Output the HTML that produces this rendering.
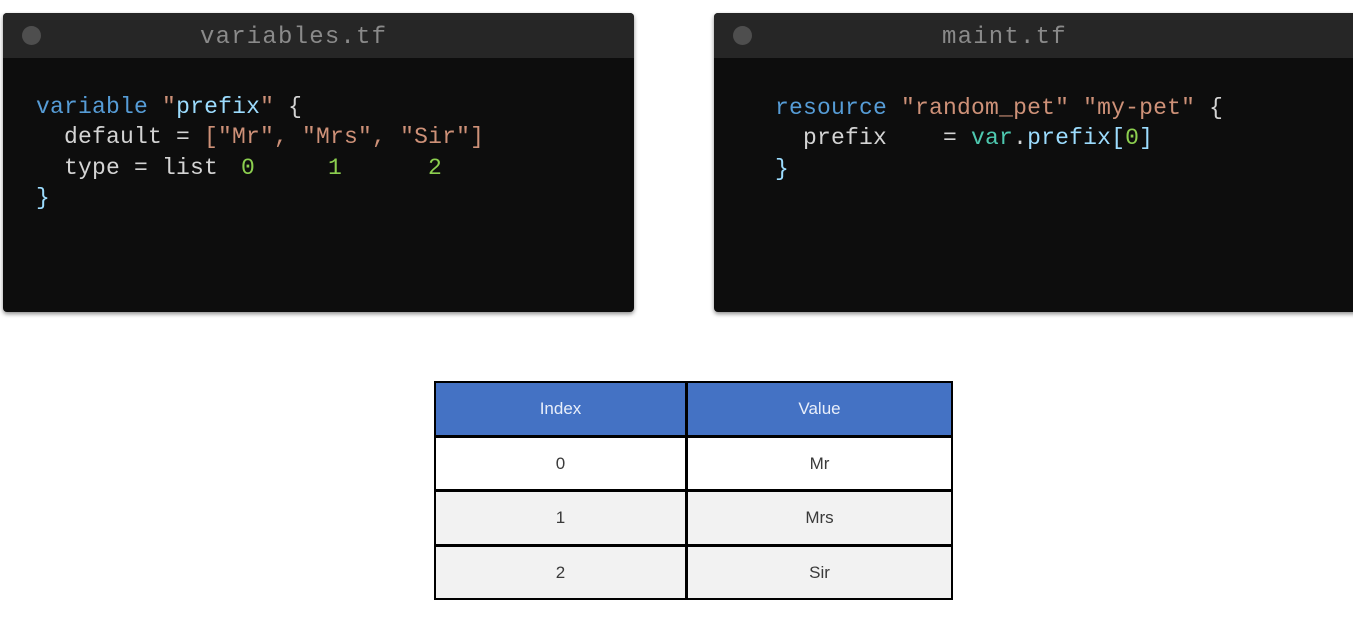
<!DOCTYPE html>
<html><head><meta charset="utf-8"><style>
body{margin:0;width:1353px;height:620px;background:#fff;position:relative;overflow:hidden;font-family:"Liberation Mono",monospace}
.pan{position:absolute;top:13px;height:299px;background:#0d0d0d;border-radius:4px;box-shadow:0 2px 4px rgba(0,0,0,.45);overflow:hidden}
.bar{position:absolute;left:0;right:0;top:0;height:45px;background:#262626}
.dot{position:absolute;left:19px;top:13px;width:19px;height:19px;border-radius:50%;background:#4e4e4e}
.ttl{position:absolute;top:10px;font-size:24px;color:#8a8a8a;letter-spacing:1.2px;line-height:30px}
.ln{position:absolute;font-size:23px;letter-spacing:0.2px;line-height:30px;white-space:pre;color:#d4d4d4}
.k{color:#569cd6}.s{color:#ce9178}.p{color:#9cdcfe}.g{color:#8ccf4f}.t{color:#4ec9b0}
.tb{position:absolute;left:434px;top:381px;width:519px;height:219px;background:#000}
.c{position:absolute;display:flex;align-items:center;justify-content:center;font-family:"Liberation Sans",sans-serif;font-size:17px;color:#3a3a3a}
</style></head><body>
<div class="pan" style="left:3px;width:631px">
<div class="bar"></div><div class="dot"></div>
<div class="ttl" style="left:197px">variables.tf</div>
<div class="ln" style="left:33px;top:79px"><span class="k">variable</span> <span class="s">"</span><span class="p">prefix</span><span class="s">"</span> {</div>
<div class="ln" style="left:33px;top:109px">  default = <span class="s">["Mr", "Mrs", "Sir"]</span></div>
<div class="ln" style="left:33px;top:140px">  type = list</div>
<div class="ln g" style="left:238px;top:140px">0</div>
<div class="ln g" style="left:325px;top:140px">1</div>
<div class="ln g" style="left:425px;top:140px">2</div>
<div class="ln" style="left:33px;top:170px"><span class="p">}</span></div>
</div>
<div class="pan" style="left:714px;width:645px">
<div class="bar"></div><div class="dot"></div>
<div class="ttl" style="left:228px">maint.tf</div>
<div class="ln" style="left:61px;top:80px"><span class="k">resource</span> <span class="s">"random_pet" "my-pet"</span> {</div>
<div class="ln" style="left:61px;top:110px">  prefix    = <span class="t">var</span>.<span class="p">prefix[</span><span class="g">0</span><span class="p">]</span></div>
<div class="ln" style="left:61px;top:141px"><span class="p">}</span></div>
</div>
<div class="tb">
<div class="c" style="left:2px;top:2px;width:249px;height:52px;background:#4472c4;color:#e8eefa">Index</div>
<div class="c" style="left:254px;top:2px;width:263px;height:52px;background:#4472c4;color:#e8eefa">Value</div>
<div class="c" style="left:2px;top:57px;width:249px;height:51px;background:#fff">0</div>
<div class="c" style="left:254px;top:57px;width:263px;height:51px;background:#fff">Mr</div>
<div class="c" style="left:2px;top:111px;width:249px;height:52px;background:#f2f2f2">1</div>
<div class="c" style="left:254px;top:111px;width:263px;height:52px;background:#f2f2f2">Mrs</div>
<div class="c" style="left:2px;top:166px;width:249px;height:51px;background:#f2f2f2">2</div>
<div class="c" style="left:254px;top:166px;width:263px;height:51px;background:#f2f2f2">Sir</div>
</div>
</body></html>
